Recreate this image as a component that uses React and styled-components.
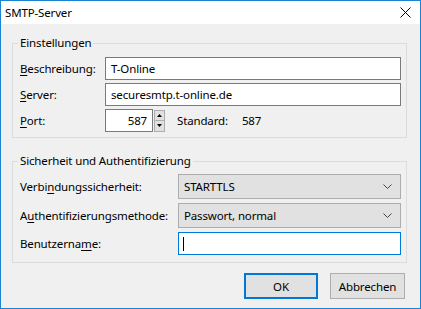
import React from "react";
import styled, { createGlobalStyle } from "styled-components";

const Global = createGlobalStyle`
  html, body { margin: 0; padding: 0; background: #fff; }
  body { font-family: "Noto Sans", "Segoe UI", sans-serif; font-size: 11.5px; letter-spacing: -0.15px; color: #000; }
  * { box-sizing: border-box; }
`;

const Window = styled.div`
  width: 421px;
  height: 309px;
  border: 1px solid #1883d7;
  display: flex;
  flex-direction: column;
  background: #f0f0f0;
`;

const TitleBar = styled.div`
  height: 25px;
  background: #fff;
  display: flex;
  align-items: center;
  justify-content: space-between;
  padding: 0 9px 0 4px;
`;

const Content = styled.div`
  flex: 1;
  display: flex;
  flex-direction: column;
  padding: 11px 13px 9px 11px;
`;

const Group = styled.fieldset`
  margin: 0 0 ${(p) => p.$mb || 0}px 0;
  border: 1px solid #dcdcdc;
  padding: ${(p) => p.$pt}px 5px ${(p) => p.$pb}px 7px;
  min-width: 0;
  display: flex;
  flex-direction: column;
  gap: ${(p) => p.$gap}px;
`;

const Legend = styled.legend`
  padding: 0 2px;
  margin-left: -2px;
  line-height: 16px;
`;

const Row = styled.div`
  display: grid;
  grid-template-columns: ${(p) => p.$label}px 1fr;
  align-items: center;
`;

const Label = styled.span`
  white-space: nowrap;
  u { text-decoration: underline; text-underline-offset: 2px; }
`;

const TextBox = styled.div`
  height: 23px;
  border: 1px solid ${(p) => (p.$focus ? "#0078d7" : "#7a7a7a")};
  background: #fff;
  display: flex;
  align-items: center;
  padding: 0 5px;
  justify-content: ${(p) => (p.$right ? "flex-end" : "flex-start")};
  width: ${(p) => (p.$w ? `${p.$w}px` : "auto")};
`;

const Caret = styled.span`
  width: 1px;
  height: 14px;
  background: #000;
  margin-left: -1px;
`;

const PortWrap = styled.div`
  display: flex;
  align-items: center;
`;

const Spinner = styled.div`
  width: 11px;
  height: 22px;
  display: flex;
  flex-direction: column;
  margin-left: 1px;
  margin-right: 12px;
`;

const SpinButton = styled.div`
  flex: 1;
  border: 1px solid #adadad;
  background: #e1e1e1;
  display: flex;
  align-items: center;
  justify-content: center;
  & + & { border-top: none; }
`;

const Std = styled.span`
  margin-right: 14px;
`;

const Combo = styled.div`
  height: 25px;
  border: 1px solid #adadad;
  background: #e1e1e1;
  display: flex;
  align-items: center;
  justify-content: space-between;
  padding: 0 8px 0 5px;
`;

const Buttons = styled.div`
  margin-top: 10px;
  display: flex;
  justify-content: flex-end;
  gap: 12px;
  padding-right: 2px;
`;

const Button = styled.div`
  width: ${(p) => p.$w}px;
  height: 26px;
  border: ${(p) => (p.$default ? "2px solid #0078d7" : "1px solid #adadad")};
  background: #e1e1e1;
  display: flex;
  align-items: center;
  justify-content: center;
`;

const Chevron = () => (
  <svg width="9" height="5" viewBox="0 0 9 5">
    <polyline points="0.5,0.5 4.5,4.5 8.5,0.5" fill="none" stroke="#444" strokeWidth="1" />
  </svg>
);

const Up = () => (
  <svg width="5" height="3" viewBox="0 0 5 3"><polygon points="2.5,0 5,3 0,3" fill="#000" /></svg>
);
const Down = () => (
  <svg width="5" height="3" viewBox="0 0 5 3"><polygon points="0,0 5,0 2.5,3" fill="#000" /></svg>
);

export default function App() {
  return (
    <>
      <Global />
      <Window>
        <TitleBar>
          <span>SMTP-Server</span>
          <svg width="11" height="11" viewBox="0 0 11 11">
            <path d="M0.5 0.5 L10.5 10.5 M10.5 0.5 L0.5 10.5" stroke="#000" strokeWidth="1" />
          </svg>
        </TitleBar>
        <Content>
          <Group $pt={6} $pb={5} $gap={3} $mb={15}>
            <Legend>Einstellungen</Legend>
            <Row $label={85}>
              <Label><u>B</u>eschreibung:</Label>
              <TextBox>T-Online</TextBox>
            </Row>
            <Row $label={85}>
              <Label><u>S</u>erver:</Label>
              <TextBox>securesmtp.t-online.de</TextBox>
            </Row>
            <Row $label={85}>
              <Label><u>P</u>ort:</Label>
              <PortWrap>
                <TextBox $w={48} $right>587</TextBox>
                <Spinner>
                  <SpinButton><Up /></SpinButton>
                  <SpinButton><Down /></SpinButton>
                </Spinner>
                <Std>Standard:</Std>
                <span>587</span>
              </PortWrap>
            </Row>
          </Group>
          <Group $pt={5} $pb={7} $gap={4}>
            <Legend>Sicherheit und Authentifizierung</Legend>
            <Row $label={158}>
              <Label>Verbi<u>n</u>dungssicherheit:</Label>
              <Combo><span>STARTTLS</span><Chevron /></Combo>
            </Row>
            <Row $label={158}>
              <Label>A<u>u</u>thentifizierungsmethode:</Label>
              <Combo><span>Passwort, normal</span><Chevron /></Combo>
            </Row>
            <Row $label={158}>
              <Label>Benutzerna<u>m</u>e:</Label>
              <TextBox $focus><Caret /></TextBox>
            </Row>
          </Group>
          <Buttons>
            <Button $w={74} $default>OK</Button>
            <Button $w={75}>Abbrechen</Button>
          </Buttons>
        </Content>
      </Window>
    </>
  );
}
